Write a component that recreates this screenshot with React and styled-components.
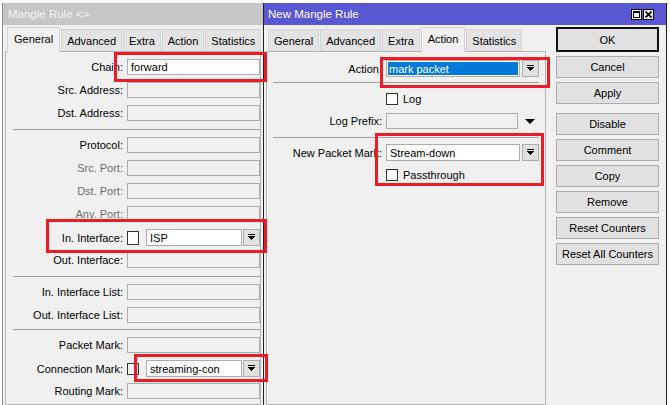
import React from "react";
import styled, { createGlobalStyle } from "styled-components";

const GlobalStyle = createGlobalStyle`
  html, body {
    margin: 0;
    padding: 0;
    background: #ffffff;
  }
  body {
    font-family: "Liberation Sans", Arial, sans-serif;
    font-size: 11px;
    color: #000;
  }
`;

const Desktop = styled.div`
  position: relative;
  display: flex;
  width: 670px;
  height: 405px;
  padding: 3px 0 0 2px;
  box-sizing: border-box;
  overflow: hidden;
  background: #ffffff;
`;

const Window = styled.div`
  display: flex;
  flex-direction: column;
  flex-shrink: 0;
  width: ${(p) => p.$width}px;
  background: #f0f0f0;
  border-left: 1px solid ${(p) => (p.$active ? "#222" : "#8c8c8c")};
  border-right: ${(p) => (p.$active ? "1px solid #222" : "none")};
  box-sizing: border-box;
`;

const TitleBar = styled.div`
  display: flex;
  align-items: center;
  height: 22px;
  padding: 0 12px 0 ${(p) => (p.$active ? 4 : 5)}px;
  background: ${(p) => (p.$active ? "#5a57d3" : "#c6c6c6")};
  color: ${(p) => (p.$active ? "#ffffff" : "#f4f4f4")};
  font-size: 11.5px;
  white-space: nowrap;
`;

const TitleButtons = styled.div`
  display: flex;
  gap: 1px;
  margin-left: auto;
`;

const TitleButton = styled.div`
  width: 11px;
  height: 11px;
  box-sizing: border-box;
  border: 1px solid #000;
  background: #f0f0f0;
  display: flex;
  align-items: center;
  justify-content: center;
`;

const Body = styled.div`
  display: flex;
  flex: 1;
  gap: 10px;
  padding: 0 ${(p) => p.$right}px 0 2px;
  min-height: 0;
`;

const TabArea = styled.div`
  display: flex;
  flex-direction: column;
  width: ${(p) => p.$width}px;
  flex-shrink: 0;
`;

const TabBar = styled.div`
  display: flex;
  align-items: flex-end;
  gap: 1px;
  height: 26px;
  padding-left: 2px;
`;

const Tab = styled.div`
  position: relative;
  display: flex;
  align-items: center;
  justify-content: center;
  height: ${(p) => (p.$active ? 25 : 22)}px;
  padding: 0 ${(p) => (p.$active ? 6 : 5)}px ${(p) => (p.$active ? 3 : 0)}px;
  box-sizing: border-box;
  background: ${(p) => (p.$active ? "#f0f0f0" : "#e3e3e3")};
  border: 1px solid #d4d4d4;
  border-bottom: none;
  margin-bottom: ${(p) => (p.$active ? -1 : 0)}px;
  z-index: ${(p) => (p.$active ? 1 : 0)};
  white-space: nowrap;
`;

const Panel = styled.div`
  flex: 1;
  display: flex;
  flex-direction: column;
  padding: ${(p) => p.$top}px ${(p) => p.$right}px 0 0;
  border: 1px solid #b4b4b4;
  background: #f0f0f0;
`;

const Section = styled.div`
  display: flex;
  flex-direction: column;
  gap: ${(p) => p.$gap}px;
`;

const Row = styled.div`
  display: grid;
  grid-template-columns: ${(p) => p.$label}px 1fr;
  column-gap: 4px;
  align-items: center;
  height: ${(p) => p.$h || 16}px;
`;

const Label = styled.div`
  text-align: right;
  white-space: nowrap;
  color: ${(p) => (p.$disabled ? "#6d6d6d" : "#000")};
`;

const Field = styled.div`
  display: flex;
  align-items: center;
  min-width: 0;
  height: 100%;
`;

const Input = styled.div`
  flex: 1;
  min-width: 0;
  height: 100%;
  box-sizing: border-box;
  border: 1px solid #adadad;
  background: ${(p) => (p.$enabled ? "#ffffff" : "#f0f0f0")};
  padding: 0 3px;
  display: flex;
  align-items: center;
  white-space: nowrap;
  overflow: hidden;
`;

const Highlight = styled.span`
  flex: 1;
  align-self: stretch;
  display: flex;
  align-items: center;
  margin: 1px -2px;
  padding: 0 1px;
  background: #0078d7;
  color: #ffffff;
`;

const DropButton = styled.div`
  width: 17px;
  height: 17px;
  flex-shrink: 0;
  margin-left: ${(p) => p.$gap}px;
  box-sizing: border-box;
  border: 1px solid #adadad;
  background: #e1e1e1;
  display: flex;
  align-items: center;
  justify-content: center;
`;

const ArrowSlot = styled.div`
  width: 19px;
  flex-shrink: 0;
  display: flex;
  justify-content: center;
  align-items: center;
  padding-left: 2px;
  padding-top: 1px;
`;

const Check = styled.div`
  width: 12px;
  height: ${(p) => p.$tall ? 14 : 12}px;
  flex-shrink: 0;
  box-sizing: border-box;
  border: 1px solid #333;
  background: #ffffff;
  margin-right: ${(p) => p.$gap}px;
`;

const CheckText = styled.span`
  white-space: nowrap;
`;

const Divider = styled.div`
  height: 1px;
  background: #a0a0a0;
  margin: ${(p) => p.$top}px ${(p) => p.$right || 0}px ${(p) => p.$bottom}px
    ${(p) => p.$left}px;
`;

const ButtonColumn = styled.div`
  display: flex;
  flex-direction: column;
  gap: 4px;
  width: 103px;
  padding-top: 2px;
`;

const Button = styled.div`
  height: ${(p) => (p.$default ? 25 : 22)}px;
  margin-top: ${(p) => (p.$split ? 5 : 0)}px;
  box-sizing: border-box;
  border: ${(p) => (p.$default ? "2px solid #111" : "1px solid #adadad")};
  background: #e1e1e1;
  display: flex;
  align-items: center;
  justify-content: center;
  white-space: nowrap;
`;

const Annotation = styled.div`
  position: absolute;
  box-sizing: border-box;
  border: 3px solid #ec1c24;
  pointer-events: none;
  z-index: 5;
`;

const DropIcon = () => (
  <svg width="7" height="7" viewBox="0 0 7 7" shapeRendering="crispEdges">
    <rect x="0" y="0" width="7" height="1" fill="#000" />
    <polygon points="0,2 7,2 3.5,6" fill="#000" />
  </svg>
);

const DownTriangle = () => (
  <svg width="10" height="5" viewBox="0 0 10 5">
    <polygon points="0,0 10,0 5,5" fill="#000" />
  </svg>
);

const MaxIcon = () => (
  <svg width="7" height="7" viewBox="0 0 7 7" shapeRendering="crispEdges">
    <rect x="0.5" y="0.5" width="6" height="6" fill="none" stroke="#000" />
    <rect x="0" y="0" width="7" height="2" fill="#000" />
  </svg>
);

const CloseIcon = () => (
  <svg width="7" height="7" viewBox="0 0 7 7">
    <path d="M0.5 0.5 L6.5 6.5 M6.5 0.5 L0.5 6.5" stroke="#000" strokeWidth="1.6" />
  </svg>
);

const tabs = ["General", "Advanced", "Extra", "Action", "Statistics"];

const Tabs = ({ active }) => (
  <TabBar>
    {tabs.map((t) => (
      <Tab key={t} $active={t === active}>
        {t}
      </Tab>
    ))}
  </TabBar>
);

const LEFT_LABEL = 117;
const RIGHT_LABEL = 115;

const FieldRow = ({ label, disabled, value }) => (
  <Row $label={LEFT_LABEL}>
    <Label $disabled={disabled}>{label}:</Label>
    <Field>
      <Input $enabled={!!value}>{value}</Input>
    </Field>
  </Row>
);

const CheckComboRow = ({ label, value, tall }) => (
  <Row $label={LEFT_LABEL}>
    <Label>{label}:</Label>
    <Field>
      <Check $gap={7} $tall={tall} />
      <Input $enabled>{value}</Input>
      <DropButton $gap={1}>
        <DropIcon />
      </DropButton>
    </Field>
  </Row>
);

const annotations = [
  { x: 114, y: 52, w: 153, h: 30 },
  { x: 46, y: 219, w: 221, h: 34 },
  { x: 134, y: 354, w: 134, h: 28 },
  { x: 380, y: 57, w: 170, h: 31 },
  { x: 375, y: 133, w: 169, h: 53 },
];

const buttons = [
  { text: "OK", def: true },
  { text: "Cancel" },
  { text: "Apply" },
  { text: "Disable", split: true },
  { text: "Comment" },
  { text: "Copy" },
  { text: "Remove" },
  { text: "Reset Counters" },
  { text: "Reset All Counters" },
];

export default function App() {
  return (
    <>
      <GlobalStyle />
      <Desktop>
        <Window $width={261}>
          <TitleBar>Mangle Rule &lt;&gt;</TitleBar>
          <Body $right={2}>
            <TabArea $width={256}>
              <Tabs active="General" />
              <Panel $top={7} $right={0}>
                <Section $gap={7}>
                  <FieldRow label="Chain" value="forward" />
                  <FieldRow label="Src. Address" />
                  <FieldRow label="Dst. Address" />
                </Section>
                <Divider $top={8} $bottom={7} $left={7} />
                <Section $gap={7}>
                  <FieldRow label="Protocol" />
                  <FieldRow label="Src. Port" disabled />
                  <FieldRow label="Dst. Port" disabled />
                  <FieldRow label="Any. Port" disabled />
                  <CheckComboRow label="In. Interface" value="ISP" tall />
                  <FieldRow label="Out. Interface" />
                </Section>
                <Divider $top={8} $bottom={7} $left={7} />
                <Section $gap={7}>
                  <FieldRow label="In. Interface List" />
                  <FieldRow label="Out. Interface List" />
                </Section>
                <Divider $top={6} $bottom={7} $left={7} />
                <Section $gap={7}>
                  <FieldRow label="Packet Mark" />
                  <CheckComboRow label="Connection Mark" value="streaming-con" />
                  <FieldRow label="Routing Mark" />
                </Section>
              </Panel>
            </TabArea>
          </Body>
        </Window>

        <Window $width={404} $active>
          <TitleBar $active>
            New Mangle Rule
            <TitleButtons>
              <TitleButton>
                <MaxIcon />
              </TitleButton>
              <TitleButton>
                <CloseIcon />
              </TitleButton>
            </TitleButtons>
          </TitleBar>
          <Body $right={6}>
            <TabArea $width={280}>
              <Tabs active="Action" />
              <Panel $top={8} $right={6}>
                <Row $label={RIGHT_LABEL} $h={17}>
                  <Label>Action:</Label>
                  <Field>
                    <Input $enabled>
                      <Highlight>mark packet</Highlight>
                    </Input>
                    <DropButton $gap={2}>
                      <DropIcon />
                    </DropButton>
                  </Field>
                </Row>
                <Divider $top={5} $bottom={8} $left={6} />
                <Section $gap={6}>
                  <Row $label={RIGHT_LABEL}>
                    <span />
                    <Field>
                      <Check $gap={5} />
                      <CheckText>Log</CheckText>
                    </Field>
                  </Row>
                  <Row $label={RIGHT_LABEL}>
                    <Label>Log Prefix:</Label>
                    <Field>
                      <Input />
                      <ArrowSlot>
                        <DownTriangle />
                      </ArrowSlot>
                    </Field>
                  </Row>
                </Section>
                <Divider $top={8} $bottom={6} $left={6} />
                <Section $gap={7}>
                  <Row $label={RIGHT_LABEL}>
                    <Label>New Packet Mark:</Label>
                    <Field>
                      <Input $enabled>Stream-down</Input>
                      <DropButton $gap={2}>
                        <DropIcon />
                      </DropButton>
                    </Field>
                  </Row>
                  <Row $label={RIGHT_LABEL}>
                    <span />
                    <Field>
                      <Check $gap={5} />
                      <CheckText>Passthrough</CheckText>
                    </Field>
                  </Row>
                </Section>
              </Panel>
            </TabArea>
            <ButtonColumn>
              {buttons.map((b) => (
                <Button key={b.text} $default={b.def} $split={b.split}>
                  {b.text}
                </Button>
              ))}
            </ButtonColumn>
          </Body>
        </Window>

        {annotations.map((a, i) => (
          <Annotation
            key={i}
            style={{ left: a.x, top: a.y, width: a.w, height: a.h }}
          />
        ))}
      </Desktop>
    </>
  );
}
